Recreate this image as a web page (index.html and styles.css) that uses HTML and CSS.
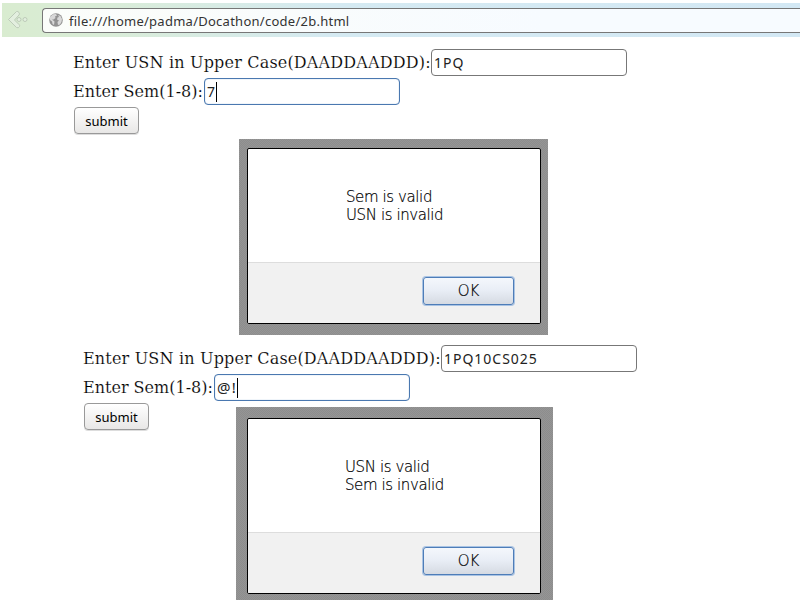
FILE: index.html
```html
<!DOCTYPE html>
<html lang="en">
<head>
<meta charset="utf-8">
<title>USN validation</title>
<link rel="stylesheet" href="styles.css">
</head>
<body>
<header class="toolbar">
  <svg class="back" width="24" height="24" viewBox="0 0 24 24"><path d="M9.500 3.500 1.500 11.500l8 8q2 1 3-1 .5-1-.5-2L7.500 12l4.500-5q1-1 0-2.500-1-1.500-2.500-1Z"/><circle cx="12" cy="11.500" r="2"/><circle cx="18" cy="11.500" r="2"/></svg>
  <div class="address">
    <svg class="globe" width="14" height="14" viewBox="0 0 14 14"><circle class="sea" cx="7" cy="7" r="6.800"/><path d="M1 4 4 1.300 7 1l1 1.500-2 1 .5 1.500-2 1.500L3 6.500 5.500 8.500 5 12 3.500 11 3 8.500 1 7ZM9 2l2.500 1L13 6l-.5 3-1.500 2.500L9 12 8.500 9 10 7.500 8 6.500 8.500 4.500 10 4Z"/></svg>
    <span class="url">file:///home/padma/Docathon/code/2b.html</span>
  </div>
</header>
<main>
  <section class="form">
    <div class="row"><span class="label usn">Enter USN in Upper Case(DAADDAADDD):</span><div class="field"><span>1PQ</span></div></div>
    <div class="row"><span class="label sem">Enter Sem(1-8):</span><div class="field focused"><span>7</span><i class="caret"></i></div></div>
    <button class="submit">submit</button>
  </section>
  <section class="backdrop first">
    <div class="dialog">
      <div class="message">Sem is valid<br>USN is invalid</div>
      <div class="actions"><button class="ok">OK</button></div>
    </div>
  </section>
  <section class="form second-form">
    <div class="row"><span class="label usn">Enter USN in Upper Case(DAADDAADDD):</span><div class="field"><span>1PQ10CS025</span></div></div>
    <div class="row"><span class="label sem">Enter Sem(1-8):</span><div class="field focused"><span class="symbols">@!</span><i class="caret"></i></div></div>
    <button class="submit">submit</button>
  </section>
  <section class="backdrop second">
    <div class="dialog">
      <div class="message">USN is valid<br>Sem is invalid</div>
      <div class="actions"><button class="ok">OK</button></div>
    </div>
  </section>
</main>
</body>
</html>
```
FILE: styles.css
```css
* { box-sizing: border-box; }
body { margin: 0; height: 600px; overflow: hidden; background: #fff; color: #111; }
.toolbar { display: flex; margin: 3px 0 0 2px; height: 34px; padding: 5px 0 3px 5px; background: linear-gradient(90deg, #d9ecd0 0, #d9ecd8 110px, #d5eaf2 330px, #d3e8f4 100%); }
.back { flex: none; margin: 0 11px 0 0; fill: #e3efdf; stroke: #bdcbb9; stroke-width: 1; }
.address { display: flex; align-items: center; flex: 1; height: 25px; padding-left: 6px; border: 1px solid #777; border-right: 0; border-radius: 4px 0 0 4px; background: linear-gradient(90deg, #fbfdfa, #f7fbff 500px); }
.globe { flex: none; margin: -2px 6px 0 0; fill: #d8d8d8; }
.globe .sea { fill: #929292; }
.url { font: 13px/22px "Noto Sans", sans-serif; letter-spacing: .26px; color: #333; white-space: nowrap; }
.form { margin: 12px 0 0 73px; height: 86px; }
.second-form { margin: 10px 0 0 83px; }
.row { display: flex; height: 27px; margin-bottom: 2px; align-items: center; }
.label { font: 16px/26px "DejaVu Serif", serif; color: #000; white-space: nowrap; flex: none; -webkit-text-stroke: .15px #fff; }
.usn { width: 358px; letter-spacing: .18px; }
.sem { width: 131px; }
.field { width: 196px; height: 27px; padding: 0 2px; display: flex; align-items: center; border: 1px solid #777; border-radius: 4px; font: 14px/25px "Noto Sans", sans-serif; letter-spacing: .98px; color: #222; }
.symbols { font-size: 15px; letter-spacing: 1.300px; }
.focused { border-color: #4a78b0; box-shadow: inset 0 0 1px #6b95c8; }
.caret { width: 1px; height: 20px; background: #000; }
.submit { display: block; width: 65px; height: 27px; margin-left: 1px; padding: 1px 0 0; border: 1px solid #999; border-radius: 4px; background: linear-gradient(#fff, #e8e7e6); box-shadow: 0 1px 0 #ddd; font: 13px/24px "Noto Sans", sans-serif; color: #000; }
.backdrop { background: repeating-conic-gradient(#8d8d8d 0 25%, #959595 0 50%) 0 0 / 2px 2px; }
.first { width: 309px; height: 196px; margin: 4px 0 0 239px; padding: 9px 0 0 8px; }
.second { width: 317px; height: 193px; margin: -24px 0 0 236px; padding: 11px 0 0 11px; }
.dialog { width: 294px; height: 176px; border: 1px solid #000; border-radius: 2px; background: #fff; overflow: hidden; }
.message { height: 113px; padding: 39px 0 0 98px; font: 200 15px/18px "DejaVu Sans", sans-serif; letter-spacing: -.4px; -webkit-text-stroke: .2px #000; white-space: nowrap; color: #000; }
.second .message { padding-left: 97px; }
.actions { height: 61px; border-top: 1px solid #ddd; background: #f1f1f1; padding: 14px 0 0 175px; }
.ok { display: block; width: 91px; height: 28px; padding: 0; border: 1px solid #4e7db8; border-radius: 3px; box-shadow: 0 0 0 1px #a9c3e3; background: linear-gradient(#f4f7fc, #e8edf5 50%, #d5dae2); font: 200 15px/24px "DejaVu Sans", sans-serif; -webkit-text-stroke: .2px #000; color: #000; }
```
